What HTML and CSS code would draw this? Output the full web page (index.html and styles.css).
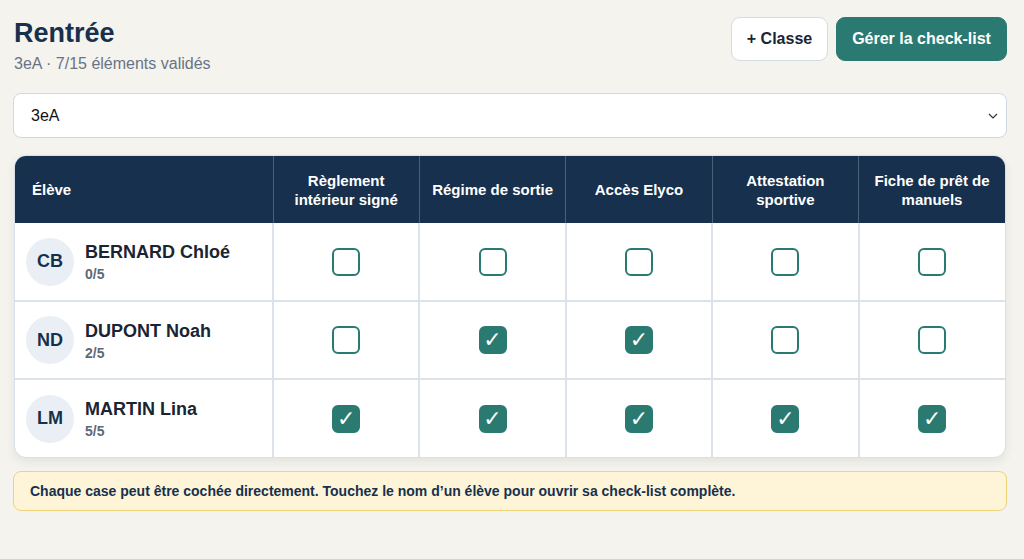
FILE: index.html
```html
<!DOCTYPE html>
<html lang="fr">
<head>
    <meta charset="UTF-8">
    <meta name="viewport" content="width=device-width, initial-scale=1.0">
    <title>Rentrée</title>
    <link rel="stylesheet" href="styles.css">
</head>
<body>

    <div class="page">
        <div class="top">
            <div class="title_box">
                <h1>Rentrée</h1>
                <p class="sub">3eA · 7/15 éléments validés</p>
            </div>
            <div class="actions">
                <button class="btn btn_light">+ Classe</button>
                <button class="btn btn_main">Gérer la check-list</button>
            </div>
        </div>

        <div class="select_box">
            <span>3eA</span>
            <svg class="chev" width="10" height="6" viewBox="0 0 10 6"><path d="M1 1l4 4 4-4" fill="none" stroke="#333" stroke-width="1.2"/></svg>
        </div>

        <div class="card">
            <table class="grid">
                <colgroup>
                    <col class="c_name">
                    <col><col><col><col><col>
                </colgroup>
                <thead>
                    <tr>
                        <th class="th_name">Élève</th>
                        <th>Règlement intérieur signé</th>
                        <th>Régime de sortie</th>
                        <th>Accès Elyco</th>
                        <th>Attestation sportive</th>
                        <th>Fiche de prêt de manuels</th>
                    </tr>
                </thead>
                <tbody>
                    <tr>
                        <td>
                            <div class="student">
                                <span class="avatar">CB</span>
                                <div>
                                    <div class="name">BERNARD Chloé</div>
                                    <div class="score">0/5</div>
                                </div>
                            </div>
                        </td>
                        <td><span class="box"></span></td>
                        <td><span class="box"></span></td>
                        <td><span class="box"></span></td>
                        <td><span class="box"></span></td>
                        <td><span class="box"></span></td>
                    </tr>
                    <tr>
                        <td>
                            <div class="student">
                                <span class="avatar">ND</span>
                                <div>
                                    <div class="name">DUPONT Noah</div>
                                    <div class="score">2/5</div>
                                </div>
                            </div>
                        </td>
                        <td><span class="box"></span></td>
                        <td><span class="box on">✓</span></td>
                        <td><span class="box on">✓</span></td>
                        <td><span class="box"></span></td>
                        <td><span class="box"></span></td>
                    </tr>
                    <tr>
                        <td>
                            <div class="student">
                                <span class="avatar">LM</span>
                                <div>
                                    <div class="name">MARTIN Lina</div>
                                    <div class="score">5/5</div>
                                </div>
                            </div>
                        </td>
                        <td><span class="box on">✓</span></td>
                        <td><span class="box on">✓</span></td>
                        <td><span class="box on">✓</span></td>
                        <td><span class="box on">✓</span></td>
                        <td><span class="box on">✓</span></td>
                    </tr>
                </tbody>
            </table>
        </div>

        <div class="note">Chaque case peut être cochée directement. Touchez le nom d’un élève pour ouvrir sa check-list complète.</div>
    </div>

</body>
</html>
```

FILE: styles.css
```css
*{margin:0;padding:0;box-sizing:border-box;}
body{background:#f5f3ee;font-family:"Liberation Sans",Arial,sans-serif;color:#1b2a3e;}

.page{padding:17px 17px 0 13px;}

.top{display:flex;justify-content:space-between;align-items:flex-start;}
.title_box{padding-left:1px;}
h1{font-size:27px;line-height:32px;font-weight:700;color:#17304d;}
.sub{font-size:16px;line-height:20px;color:#687385;margin-top:5px;}

.actions{display:flex;gap:8px;}
.btn{height:44px;border-radius:9px;font-family:inherit;font-size:16px;font-weight:700;padding:0 10px;white-space:nowrap;}
.btn_light{background:#fff;border:1px solid #d3dbe5;color:#1b2433;width:97px;}
.btn_main{background:#2a7a72;border:1px solid #2a7a72;color:#fff;width:171px;}

.select_box{margin-top:19px;height:45px;background:#fff;border:1px solid #cfd7e2;border-radius:8px;display:flex;align-items:center;justify-content:space-between;padding:0 8px 0 17px;font-size:16px;color:#111;}

.card{margin:17px 1px 0 1px;background:#fff;border:1px solid #d8dfe8;border-radius:12px;overflow:hidden;box-shadow:0 4px 10px rgba(40,40,30,.08);}
.grid{width:100%;border-collapse:collapse;table-layout:fixed;}
.c_name{width:258px;}

.grid th{background:#17304d;color:#fff;font-size:15px;line-height:19px;font-weight:700;height:67px;padding:0 10px;text-align:center;border-left:1px solid #4a5f78;}
.grid th:first-child{border-left:none;}
.grid th.th_name{text-align:left;padding-left:17px;}

.grid td{height:78px;text-align:center;vertical-align:middle;border-left:2px solid #dbe2ea;border-top:2px solid #dbe2ea;}
.grid td:first-child{border-left:none;text-align:left;padding-left:11px;}
.grid tbody tr:first-child td{border-top:none;}

.student{display:flex;align-items:center;gap:11px;}
.avatar{width:48px;height:48px;border-radius:50%;background:#e9eff5;display:flex;align-items:center;justify-content:center;font-size:18px;font-weight:700;color:#17304d;flex-shrink:0;}
.name{font-size:18px;font-weight:700;color:#1b2433;line-height:22px;}
.score{font-size:14px;font-weight:700;color:#5f6878;margin-top:3px;}

.box{display:inline-flex;width:28px;height:28px;border:2px solid #2a7a72;border-radius:6px;vertical-align:middle;align-items:center;justify-content:center;color:#fff;font-family:"DejaVu Sans",sans-serif;font-size:22px;line-height:1;}
.box.on{background:#2a7a72;}

.note{margin-top:13px;background:#fef5d8;border:1px solid #efd27c;border-radius:8px;height:40px;display:flex;align-items:center;padding-left:16px;font-size:14px;font-weight:700;color:#17304d;}
```
